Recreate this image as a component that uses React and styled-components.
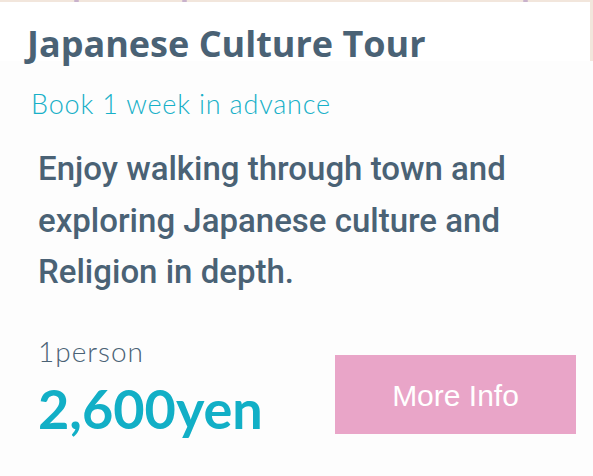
import React from "react";
import styled, { createGlobalStyle } from "styled-components";

const Global = createGlobalStyle`
  html, body { margin: 0; padding: 0; background: #fdfdfd; }
  body { width: 593px; height: 476px; overflow: hidden; }
`;

const Card = styled.div`
  width: 593px;
  height: 476px;
  background: #fdfdfd;
  display: flex;
  flex-direction: column;
`;

const HeaderBand = styled.div`
  position: relative;
  background: #f2e6dc;
  padding: 2px 3px 0 0;
  height: 61px;
  box-sizing: border-box;
  display: flex;
`;

const Dot = styled.span`
  position: absolute;
  top: 0;
  width: 5px;
  height: 2px;
  border-radius: 1px;
  background: #c9b2cc;
`;

const TitlePanel = styled.div`
  flex: 1;
  background: #ffffff;
  padding: 22px 0 0 27px;
  box-sizing: border-box;
`;

const Title = styled.h1`
  margin: 0;
  font-family: "Open Sans", "Noto Sans", sans-serif;
  font-weight: 700;
  font-size: 36px;
  line-height: 40px;
  color: #4a6275;
  white-space: nowrap;
`;

const Body = styled.div`
  display: flex;
  flex-direction: column;
  padding: 28px 0 0 31px;
`;

const Advance = styled.div`
  font-family: Lato, "Noto Sans", sans-serif;
  font-weight: 300;
  font-size: 27px;
  line-height: 30px;
  letter-spacing: 0.8px;
  color: #17b0c8;
`;

const Description = styled.p`
  margin: 24px 0 0 7px;
  font-family: Roboto, "Noto Sans", sans-serif;
  font-weight: 500;
  font-size: 33px;
  line-height: 51.5px;
  color: #4a6275;
  width: 500px;
`;

const Footer = styled.div`
  display: flex;
  justify-content: space-between;
  align-items: flex-start;
  padding: 37px 17px 0 38px;
`;

const PriceBlock = styled.div`
  display: flex;
  flex-direction: column;
`;

const Per = styled.div`
  font-family: Lato, "Noto Sans", sans-serif;
  font-weight: 300;
  font-size: 28px;
  line-height: 32px;
  letter-spacing: 1px;
  color: #4a6275;
`;

const Price = styled.div`
  margin-top: 14px;
  font-family: Lato, "Noto Sans", sans-serif;
  font-weight: 700;
  font-size: 54px;
  line-height: 56px;
  color: #12afc6;
`;

const MoreButton = styled.button`
  margin-top: 20px;
  width: 241px;
  height: 79px;
  border: none;
  background: #e9a5c8;
  color: #ffffff;
  font-family: "Liberation Sans", Arial, sans-serif;
  font-size: 30px;
  padding: 3px 0 0;
  cursor: pointer;
`;

export default function App() {
  return (
    <Card>
      <Global />
      <HeaderBand>
        <Dot style={{ left: 74 }} />
        <Dot style={{ left: 182 }} />
        <Dot style={{ left: 523 }} />
        <TitlePanel>
          <Title>Japanese Culture Tour</Title>
        </TitlePanel>
      </HeaderBand>
      <Body>
        <Advance>Book 1 week in advance</Advance>
        <Description>
          Enjoy walking through town and exploring Japanese culture and Religion in depth.
        </Description>
      </Body>
      <Footer>
        <PriceBlock>
          <Per>1person</Per>
          <Price>2,600yen</Price>
        </PriceBlock>
        <MoreButton>More Info</MoreButton>
      </Footer>
    </Card>
  );
}
